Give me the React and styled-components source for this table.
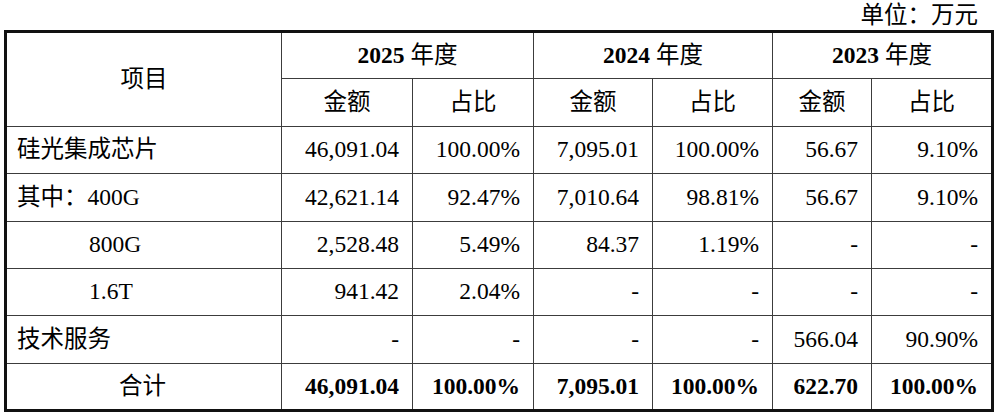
import styled, { createGlobalStyle } from "styled-components";

const GlobalStyle = createGlobalStyle`
  html, body {
    margin: 0;
    padding: 0;
    background: #fff;
  }
  body {
    font-family: "Liberation Serif", "Noto Sans CJK SC", serif;
    color: #000;
  }
`;

const rows = [
  { name: "硅光集成芯片", values: ["46,091.04", "100.00%", "7,095.01", "100.00%", "56.67", "9.10%"] },
  { name: "其中：400G", values: ["42,621.14", "92.47%", "7,010.64", "98.81%", "56.67", "9.10%"] },
  { name: "800G", indent: true, values: ["2,528.48", "5.49%", "84.37", "1.19%", "-", "-"] },
  { name: "1.6T", indent: true, values: ["941.42", "2.04%", "-", "-", "-", "-"] },
  { name: "技术服务", values: ["-", "-", "-", "-", "566.04", "90.90%"] },
];

const total = ["46,091.04", "100.00%", "7,095.01", "100.00%", "622.70", "100.00%"];
const years = ["2025", "2024", "2023"];
const widths = [276, 131, 121, 119, 120, 99, 121];

const Page = styled.div`
  width: 1000px;
  padding: 0 6px 0 4px;
  box-sizing: border-box;
`;

const Unit = styled.div`
  height: 30px;
  line-height: 30px;
  text-align: right;
  padding-right: 16px;
  font-size: 23.5px;
`;

const Table = styled.table`
  width: 990px;
  border-collapse: collapse;
  table-layout: fixed;
  border: 3px solid #111;
  font-size: 23.5px;
`;

const Row = styled.tr`
  height: 47.4px;
`;

const Cell = styled.td`
  border: 1.6px solid #3c3c3c;
  padding: 0 13px 0 ${(p) => (p.$indent ? "82px" : "10px")};
  text-align: ${(p) => p.$align || "right"};
  font-weight: ${(p) => (p.$bold ? 700 : 400)};
  vertical-align: middle;
  white-space: nowrap;
  line-height: 1;
`;

const HeadCell = styled.th`
  border: 1.6px solid #3c3c3c;
  padding: 0;
  text-align: center;
  font-weight: 400;
  vertical-align: middle;
  line-height: 1;
`;

const Year = styled.b`
  font-weight: 700;
`;

export default function App() {
  return (
    <Page>
      <GlobalStyle />
      <Unit>单位：万元</Unit>
      <Table>
        <colgroup>
          {widths.map((w, i) => (
            <col key={i} style={{ width: w }} />
          ))}
        </colgroup>
        <thead>
          <Row>
            <HeadCell rowSpan={2}>项目</HeadCell>
            {years.map((y) => (
              <HeadCell key={y} colSpan={2}>
                <Year>{y}</Year> 年度
              </HeadCell>
            ))}
          </Row>
          <Row>
            {years.map((y) => [
              <HeadCell key={y + "a"}>金额</HeadCell>,
              <HeadCell key={y + "b"}>占比</HeadCell>,
            ])}
          </Row>
        </thead>
        <tbody>
          {rows.map((r) => (
            <Row key={r.name}>
              <Cell $align="left" $indent={r.indent}>
                {r.name}
              </Cell>
              {r.values.map((v, i) => (
                <Cell key={i}>{v}</Cell>
              ))}
            </Row>
          ))}
          <Row>
            <Cell $align="center">合计</Cell>
            {total.map((v, i) => (
              <Cell key={i} $bold>
                {v}
              </Cell>
            ))}
          </Row>
        </tbody>
      </Table>
    </Page>
  );
}
